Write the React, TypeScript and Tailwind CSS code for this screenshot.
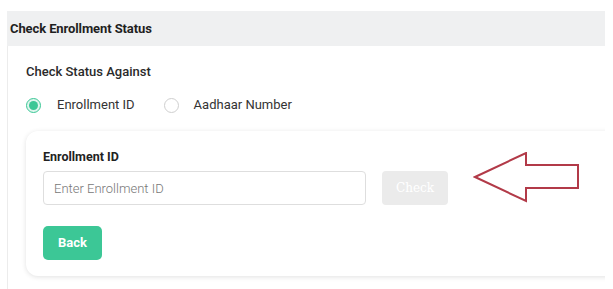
import React from 'react';

export default function App() {
  const [mode, setMode] = React.useState('enrollment');

  return (
    <div className="w-[613px] h-[289px] bg-white overflow-hidden pt-[11px] pl-[7px]" style={{ fontFamily: 'Roboto, "Liberation Sans", sans-serif' }}>
      <div className="w-[598px] h-[278px] flex flex-col">
        {/* Header */}
        <div className="h-[35px] bg-[#eff0f1] flex items-center pl-[3px]">
          <span className="text-[13px] font-bold text-[#1f1f1f] tracking-[-0.1px]">Check Enrollment Status</span>
        </div>

        {/* Body */}
        <div className="flex-1 border-l border-[#ececec] overflow-hidden pl-[18px] pt-[18px]">
          <div className="h-[16px] flex items-center text-[13px] font-medium text-[#2a2a2a]">Check Status Against</div>

          <div className="mt-[17px] h-[16px] flex items-center">
            <label className="flex items-center cursor-pointer" onClick={() => setMode('enrollment')}>
              <span className={`w-[15px] h-[15px] rounded-full flex items-center justify-center border ${mode === 'enrollment' ? 'border-[#3cc796] bg-[#dff6ee]' : 'border-[#cfcfcf] bg-white'}`}>
                {mode === 'enrollment' && <span className="w-[9px] h-[9px] rounded-full bg-[#3cc796]" />}
              </span>
              <span className="ml-[16px] text-[13px] text-[#333]">Enrollment ID</span>
            </label>
            <label className="ml-[29px] flex items-center cursor-pointer" onClick={() => setMode('aadhaar')}>
              <span className={`w-[15px] h-[15px] rounded-full flex items-center justify-center border ${mode === 'aadhaar' ? 'border-[#3cc796] bg-[#dff6ee]' : 'border-[#cfcfcf] bg-white'}`}>
                {mode === 'aadhaar' && <span className="w-[9px] h-[9px] rounded-full bg-[#3cc796]" />}
              </span>
              <span className="ml-[15px] text-[13px] text-[#333]">Aadhaar Number</span>
            </label>
          </div>

          {/* Inner card */}
          <div className="mt-[18px] w-[600px] h-[145px] rounded-[12px] bg-white shadow-[0_1px_5px_rgba(0,0,0,0.12)] pl-[17px] pt-[19px]">
            <div className="h-[14px] flex items-center text-[12.5px] font-bold text-[#222]">
              {mode === 'enrollment' ? 'Enrollment ID' : 'Aadhaar Number'}
            </div>
            <div className="mt-[7px] h-[34px] flex items-start">
              <input
                className="w-[323px] h-[34px] rounded-[4px] border border-[#dedede] pl-[10px] text-[13px] font-light text-[#333] placeholder:text-[#777] outline-none"
                placeholder={mode === 'enrollment' ? 'Enter Enrollment ID' : 'Enter Aadhaar Number'}
              />
              <button className="ml-[16px] w-[66px] h-[34px] rounded-[4px] bg-[#ebebeb] text-white text-[12px]" style={{ fontFamily: '"DejaVu Serif", "Liberation Serif", serif' }}>
                Check
              </button>
              <svg className="ml-[25px] mt-[-19px] shrink-0" width="108" height="52" viewBox="0 0 108 52">
                <polygon
                  points="2,25 53,1 53,13 105,13 105,36 53,36 53,49"
                  fill="none"
                  stroke="#b23a48"
                  strokeWidth="2"
                  strokeLinejoin="miter"
                />
              </svg>
            </div>
            <button className="mt-[21px] w-[59px] h-[34px] rounded-[5px] bg-[#3cc796] text-white text-[13px] font-bold">
              Back
            </button>
          </div>
        </div>
      </div>
    </div>
  );
}
